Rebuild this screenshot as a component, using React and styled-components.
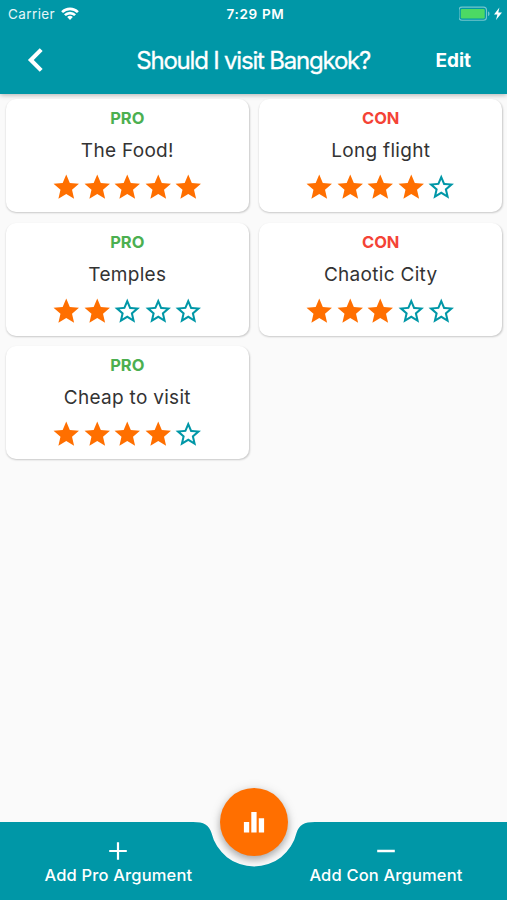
import styled, { createGlobalStyle } from "styled-components"

const args = [
    { type: "PRO", title: "The Food!", rating: 5 },
    { type: "CON", title: "Long flight", rating: 4 },
    { type: "PRO", title: "Temples", rating: 2 },
    { type: "CON", title: "Chaotic City", rating: 3 },
    { type: "PRO", title: "Cheap to visit", rating: 4 },
]

export default function App(){
    return(
        <Screen>
            <GlobalStyle />
            <Header>
                <StatusBar />
                <NavBar>
                    <BackButton aria-label="Back">
                        <svg width="17" height="26" viewBox="0 0 17 26">
                            <path d="M14.2 2.6 3.8 13l10.4 10.4" fill="none" stroke="#fff" strokeWidth="4.1" />
                        </svg>
                    </BackButton>
                    <PageTitle>Should I visit Bangkok?</PageTitle>
                    <EditButton>Edit</EditButton>
                </NavBar>
            </Header>
            <Grid>
                {args.map(arg => <Argument key={arg.title} {...arg} />)}
            </Grid>
            <Footer>
                <FooterBar>
                    <AddButton>
                        <svg width="20" height="20" viewBox="0 0 20 20">
                            <path d="M1.2 10h17.6M10 1.2v17.6" stroke="#fff" strokeWidth="2.2" />
                        </svg>
                        <AddLabel>Add Pro Argument</AddLabel>
                    </AddButton>
                    <AddButton>
                        <svg width="20" height="20" viewBox="0 0 20 20">
                            <path d="M1.2 10h17.6" stroke="#fff" strokeWidth="2.4" />
                        </svg>
                        <AddLabel>Add Con Argument</AddLabel>
                    </AddButton>
                </FooterBar>
                <ChartButton aria-label="Results">
                    <svg width="22" height="22" viewBox="0 0 22 22" fill="#fff">
                        <path d="M.9 11h5.3v10.4H.9zM8.3.9h5.3v20.5H8.3zM15.8 7.2h5.3v14.2h-5.3z" />
                    </svg>
                </ChartButton>
            </Footer>
        </Screen>
    )
}

function StatusBar(){
    return(
        <StatusRow>
            <Carrier>
                Carrier
                <svg width="18" height="13" viewBox="0 0 18 13" fill="none" stroke="#fff" strokeWidth="2.6">
                    <path d="M1.1 5.1a11.2 11.2 0 0 1 15.8 0" />
                    <path d="M3.9 8.2a7.2 7.2 0 0 1 10.2 0" />
                    <path d="M9 12.9 6.2 10.1a4 4 0 0 1 5.6 0z" fill="#fff" stroke="none" />
                </svg>
            </Carrier>
            <Time>7:29 PM</Time>
            <Power>
                <svg width="44" height="16" viewBox="0 0 44 16">
                    <rect x="0" y="1.1" width="27.5" height="13.2" rx="3" fill="none" stroke="#fff" strokeOpacity=".45" strokeWidth="1.1" />
                    <rect x="1.8" y="2.9" width="23.9" height="9.6" rx="1.2" fill="#4cd964" />
                    <path d="M29 5.5c2 .5 2 4 0 4.5z" fill="#fff" fillOpacity=".45" />
                    <path d="M40.4 1.6 35 8.5h3.4L37 14l6-7.5h-3.7z" fill="#fff" />
                </svg>
            </Power>
        </StatusRow>
    )
}

function Argument(props){
    return(
        <Card>
            <Kind type={props.type}>{props.type}</Kind>
            <CardTitle>{props.title}</CardTitle>
            <Stars>
                {[1, 2, 3, 4, 5].map(n => <Star key={n} filled={n <= props.rating} />)}
            </Stars>
        </Card>
    )
}

function Star({ filled }){
    return(
        <StarIcon viewBox="0 0 24 24" $filled={filled}>
            {filled
                ? <path d="M12 17.27 18.18 21l-1.64-7.03L22 9.24l-7.19-.61L12 2 9.19 8.63 2 9.24l5.46 4.73L5.82 21z" />
                : <path d="M22 9.24l-7.19-.62L12 2 9.19 8.63 2 9.24l5.46 4.73L5.82 21 12 17.27 18.18 21l-1.63-7.03L22 9.24zM12 15.4l-3.76 2.27 1-4.28-3.32-2.88 4.38-.38L12 6.1l1.71 4.04 4.38.38-3.32 2.88 1 4.28L12 15.4z" />}
        </StarIcon>
    )
}

const GlobalStyle = createGlobalStyle`
    * {
        box-sizing: border-box;
    }
    body {
        margin: 0;
        font-family: Inter, "Liberation Sans", sans-serif;
    }
    svg {
        display: block;
    }
    button {
        border: none;
        padding: 0;
        background: none;
        color: #fff;
        font-family: inherit;
    }
`

const Screen = styled.div`
    display: flex;
    flex-direction: column;
    width: 507px;
    height: 900px;
    background: #fafafa;
    overflow: hidden;
`

const Header = styled.header`
    height: 94px;
    background: #0097a7;
    color: #fff;
    box-shadow: 0 1px 5px rgba(0, 0, 0, 0.3);
`

const StatusRow = styled.div`
    display: grid;
    grid-template-columns: 1fr auto 1fr;
    align-items: center;
    height: 27px;
    padding: 0 4px 0 8px;
`

const Carrier = styled.div`
    display: flex;
    align-items: center;
    gap: 6px;
    font-size: 13.5px;
    letter-spacing: 0.4px;
    color: #e6f6f8;
`

const Time = styled.div`
    font-size: 13.5px;
    font-weight: 600;
    letter-spacing: 0.65px;
`

const Power = styled.div`
    justify-self: end;
`

const NavBar = styled.div`
    display: flex;
    align-items: center;
    height: 66px;
    padding: 0 36px 0 27px;
`

const BackButton = styled.button`
    width: 17px;
`

const PageTitle = styled.h1`
    flex: 1;
    margin: 0;
    padding-left: 27px;
    text-align: center;
    font-size: 24px;
    font-weight: 400;
    letter-spacing: -1.2px;
    white-space: nowrap;
    -webkit-text-stroke: 0.3px #fff;
`

const EditButton = styled.button`
    font-size: 19px;
    font-weight: 700;
`

const Grid = styled.main`
    flex: 1;
    display: grid;
    grid-template-columns: 243px 243px;
    grid-auto-rows: 113px;
    gap: 10.4px;
    padding: 5.3px 5.8px;
`

const Card = styled.div`
    display: flex;
    flex-direction: column;
    align-items: center;
    padding-top: 9px;
    border-radius: 10px;
    background: #fff;
    box-shadow: 0.5px 1px 2px rgba(0, 0, 0, 0.2);
`

const Kind = styled.div`
    height: 20px;
    line-height: 20px;
    font-size: 16.5px;
    font-weight: 700;
    color: ${props => props.type === "PRO" ? "#4caf50" : "#f44336"};
`

const CardTitle = styled.div`
    height: 24px;
    margin-top: 11px;
    line-height: 24px;
    font-size: 19px;
    letter-spacing: 0.3px;
    color: #333;
`

const Stars = styled.div`
    display: flex;
    margin-top: 9px;
`

const StarIcon = styled.svg`
    width: 30.5px;
    height: 30.5px;
    fill: ${props => props.$filled ? "#ff6f00" : "#0097a7"};
`

const Footer = styled.footer`
    position: relative;
    height: 78px;
`

/* the notch leaves room for the round chart button */
const FooterBar = styled.div`
    display: flex;
    justify-content: space-between;
    height: 78px;
    padding: 18.5px 44.5px 0;
    background: #0097a7;
    clip-path: path("M0 0H193C204 0 209 3 211.5 11A43.7 43.7 0 0 0 296.5 11C299 3 304 0 315 0H507V78H0Z");
`

const AddButton = styled.button`
    display: flex;
    flex-direction: column;
    align-items: center;
    height: 46px;
`

const AddLabel = styled.span`
    margin-top: 3px;
    line-height: 22px;
    font-size: 16.5px;
    font-weight: 500;
    letter-spacing: 0.16px;
    white-space: nowrap;
`

const ChartButton = styled.button`
    position: absolute;
    top: -34px;
    left: 220px;
    display: flex;
    align-items: center;
    justify-content: center;
    width: 68px;
    height: 68px;
    border-radius: 50%;
    background: #ff6f00;
    box-shadow: 0 4px 7px rgba(0, 0, 0, 0.25), 0 1px 12px rgba(0, 0, 0, 0.12);
`
